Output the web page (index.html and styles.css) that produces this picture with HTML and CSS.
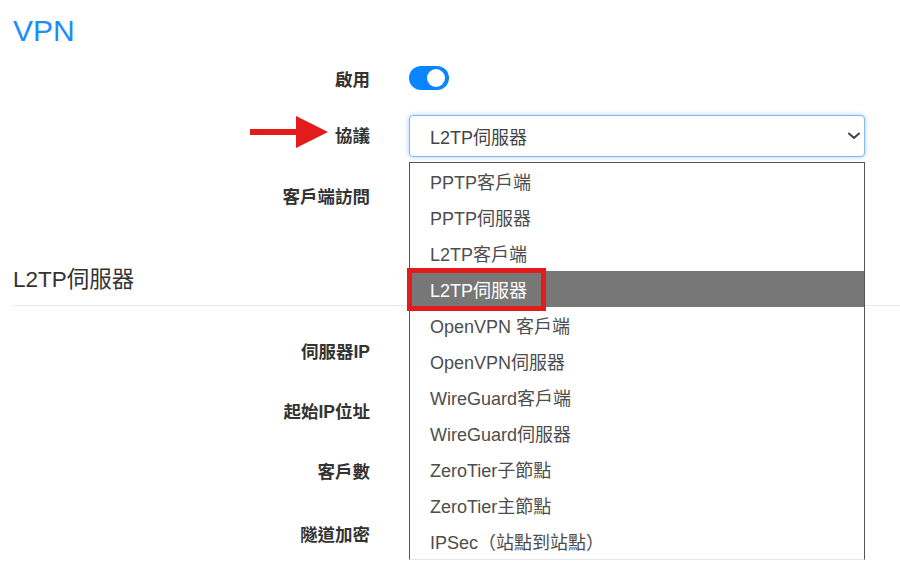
FILE: index.html
```html
<!DOCTYPE html>
<html lang="zh-Hant">
<head>
<meta charset="utf-8">
<title>VPN</title>
<link rel="stylesheet" href="styles.css">
</head>
<body>
<h1 class="title">VPN</h1>

<div class="form">
  <div class="row r-enable">
    <div class="lbl">啟用</div>
    <div class="ctl"><span class="toggle"><span class="knob"></span></span></div>
  </div>

  <div class="row r-proto">
    <div class="lbl">
      <svg class="arrow" width="78" height="36" viewBox="0 0 78 36" aria-hidden="true">
        <rect x="0" y="15" width="48" height="6" fill="#e41b1b"/>
        <polygon points="46,2 78,18 46,34" fill="#e41b1b"/>
      </svg>
      協議
    </div>
    <div class="ctl">
      <div class="select">
        <span>L2TP伺服器</span>
        <svg class="chev" width="12" height="8" viewBox="0 0 12 8" aria-hidden="true">
          <polyline points="1,1.5 6,6 11,1.5" fill="none" stroke="#444" stroke-width="2" stroke-linecap="round" stroke-linejoin="round"/>
        </svg>
      </div>
      <ul class="menu">
        <li>PPTP客戶端</li>
        <li>PPTP伺服器</li>
        <li>L2TP客戶端</li>
        <li class="active">L2TP伺服器<span class="mark"></span></li>
        <li>OpenVPN 客戶端</li>
        <li>OpenVPN伺服器</li>
        <li>WireGuard客戶端</li>
        <li>WireGuard伺服器</li>
        <li>ZeroTier子節點</li>
        <li>ZeroTier主節點</li>
        <li>IPSec（站點到站點）</li>
      </ul>
    </div>
  </div>

  <div class="row r-client">
    <div class="lbl">客戶端訪問</div>
    <div class="ctl"></div>
  </div>
</div>

<h2 class="section">L2TP伺服器</h2>

<div class="form">
  <div class="row r-s1"><div class="lbl">伺服器IP</div><div class="ctl"></div></div>
  <div class="row r-s2"><div class="lbl">起始IP位址</div><div class="ctl"></div></div>
  <div class="row r-s3"><div class="lbl">客戶數</div><div class="ctl"></div></div>
  <div class="row r-s4"><div class="lbl">隧道加密</div><div class="ctl"></div></div>
</div>
</body>
</html>
```
FILE: styles.css
```css
* { box-sizing: border-box; }

html, body { height: 100%; }

body {
  margin: 0;
  padding: 0 0 0 13px;
  background: #fff;
  color: #333;
  font-family: "Liberation Sans", "Noto Sans CJK TC", sans-serif;
  overflow: hidden;
}

.title {
  margin: 13px 0 0;
  font-size: 30px;
  line-height: 36px;
  font-weight: normal;
  color: #1a8cff;
}

.row {
  display: flex;
  align-items: center;
  gap: 39px;
  height: 42px;
}

.lbl {
  position: relative;
  flex: none;
  width: 357px;
  padding-bottom: 4px;
  text-align: right;
  font-size: 17.5px;
  font-weight: bold;
  color: #333;
}

.r-enable .lbl { padding-bottom: 0; }

.ctl {
  position: relative;
  flex: none;
  width: 456px;
  height: 100%;
}

.r-enable { margin-top: 17px; height: 24px; }
.r-proto { margin-top: 25px; }
.r-client { margin-top: 19px; }

.toggle {
  position: relative;
  display: block;
  width: 40px;
  height: 24px;
  border-radius: 12px;
  background: #0a84ff;
}

.knob {
  position: absolute;
  top: 3px;
  right: 4px;
  width: 18px;
  height: 18px;
  border-radius: 50%;
  background: #fff;
}

.arrow {
  position: absolute;
  right: 42px;
  top: 50%;
  margin-top: -22px;
}

.select {
  display: flex;
  align-items: center;
  justify-content: space-between;
  height: 42px;
  padding: 0 4px 0 20px;
  border: 1px solid #86b7f0;
  border-radius: 4px;
  box-shadow: 0 0 5px rgba(0, 120, 255, 0.35);
  font-size: 18px;
  color: #444;
  background: #fff;
}

.menu {
  position: absolute;
  z-index: 5;
  top: 47px;
  left: 0;
  width: 456px;
  margin: 0;
  padding: 0;
  list-style: none;
  background: #fff;
  border: 1px solid #555;
  border-bottom-color: #e8e8e8;
}

.menu li {
  position: relative;
  height: 36px;
  padding: 2px 0 0 20px;
  line-height: 36px;
  font-size: 18px;
  color: #4d4d4d;
}

.menu li.active {
  background: #777;
  color: #fff;
}

.mark {
  position: absolute;
  left: -3px;
  top: -3px;
  width: 139px;
  height: 43px;
  border: 5px solid #e41b1b;
}

.section {
  margin: 48px 0 0;
  padding-bottom: 11px;
  border-bottom: 1px solid #e8e8e8;
  font-size: 22.5px;
  line-height: 28px;
  font-weight: normal;
  color: #333;
}

.r-s1 { margin-top: 25px; }
.r-s2 { margin-top: 18px; }
.r-s3 { margin-top: 18px; }
.r-s4 { margin-top: 21px; }
```
